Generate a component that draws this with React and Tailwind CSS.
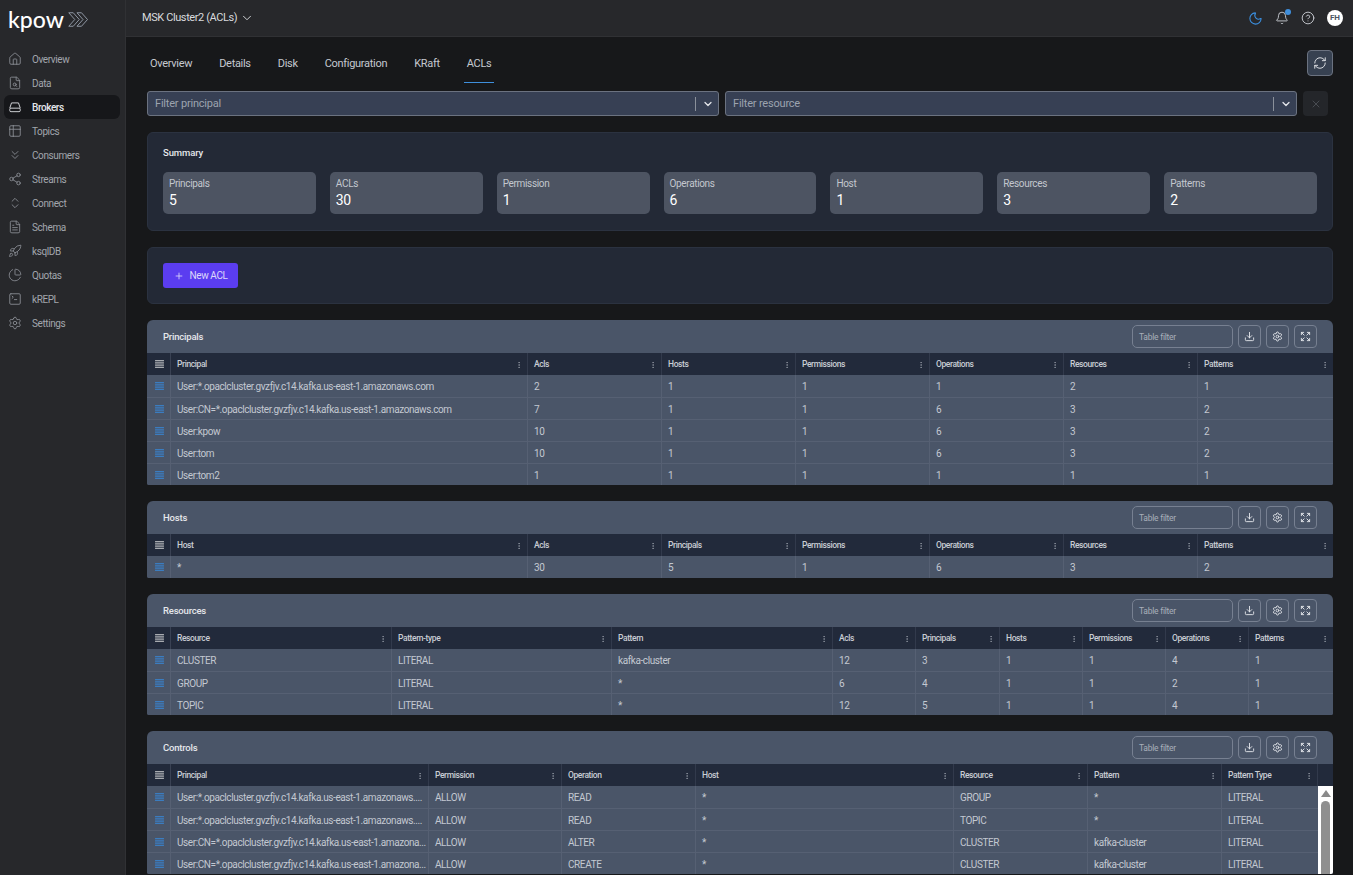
import React from "react";
import { Home, FileSearch, Table2, ChevronsDown, Share2, ChevronsUpDown, FileText, Rocket, PieChart, SquareTerminal, Settings, ChevronDown, Moon, Bell, CircleHelp, RefreshCw, X, Plus, Download, Expand, EllipsisVertical } from "lucide-react";

const FONT = "font-['Roboto',sans-serif]";

const Brokers = (p) => (
  <svg viewBox="0 0 24 24" fill="none" stroke="currentColor" strokeWidth="2" {...p}>
    <path d="M3 14 6 5h12l3 9" />
    <rect x="3" y="14" width="18" height="6" rx="2" />
  </svg>
);

const Lines = ({ className }) => (
  <svg viewBox="0 0 10 9" className={className} fill="currentColor">
    <rect x="0" y="0" width="10" height="1.5" />
    <rect x="0" y="2.5" width="10" height="1.5" />
    <rect x="0" y="5" width="10" height="1.5" />
    <rect x="0" y="7.5" width="10" height="1.5" />
  </svg>
);

const nav = [
  ["Overview", Home], ["Data", FileSearch], ["Brokers", Brokers], ["Topics", Table2], ["Consumers", ChevronsDown], ["Streams", Share2],
  ["Connect", ChevronsUpDown], ["Schema", FileText], ["ksqlDB", Rocket], ["Quotas", PieChart], ["kREPL", SquareTerminal], ["Settings", Settings],
];

const Logo = () => (
  <div className="flex items-center gap-[4px]">
    <span className="text-[23px] leading-none font-medium font-['Lato',sans-serif] text-white">kpow</span>
    <svg viewBox="0 0 28 20" className="w-[21px] h-[17px] text-gray-400" fill="none" stroke="currentColor" strokeWidth="1.2">
      <path d="M1 1h6l8 9-8 9H1l8-9z" />
      <path d="M12 1h6l8 9-8 9h-6l8-9z" />
    </svg>
  </div>
);

const Sidebar = () => (
  <aside className="w-[126px] shrink-0 bg-[#27282b] border-r border-[#303134] flex flex-col">
    <div className="h-[37px] pl-[8px] pt-[2px] flex items-center">
      <Logo />
    </div>
    <nav className="mt-[10px] pl-[4px] pr-[5px] flex flex-col">
      {nav.map(([label, Icon]) => {
        const active = label === "Brokers";
        return (
          <div key={label} className={`h-[24px] rounded-md flex items-center pl-[4px] gap-[10px] text-[10px] tracking-[-0.4px] ${active ? "bg-[#16171a] text-gray-200 font-medium" : "text-[#a2a6ad]"}`}>
            <Icon className={`w-[14px] h-[14px] ${active ? "text-gray-200" : "text-[#8a8e95]"}`} strokeWidth={1.5} />
            <span className="pt-[1px]">{label}</span>
          </div>
        );
      })}
    </nav>
  </aside>
);

const Header = () => (
  <header className="h-[37px] shrink-0 bg-[#27282b] border-b border-[#303134] flex items-center justify-between pl-[16px] pr-[10px]">
    <div className="flex items-center gap-[3px] text-[#d8dade] text-[11px] tracking-[-0.4px]">
      <span>MSK Cluster2 (ACLs)</span>
      <ChevronDown className="w-[14px] h-[14px]" strokeWidth={1.6} />
    </div>
    <div className="flex items-center gap-[12px]">
      <Moon className="w-[15px] h-[15px] text-[#3b8fe0]" strokeWidth={1.7} />
      <div className="relative">
        <Bell className="w-[14px] h-[14px] text-gray-300" strokeWidth={1.5} />
        <span className="absolute -top-[2px] right-[-2px] w-[6px] h-[6px] rounded-full bg-[#3f8fdc]" />
      </div>
      <CircleHelp className="w-[14px] h-[14px] text-gray-300" strokeWidth={1.5} />
      <div className="w-[16px] h-[16px] rounded-full bg-white text-[#4b5563] text-[8px] font-bold flex items-center justify-center">FH</div>
    </div>
  </header>
);

const tabs = ["Overview", "Details", "Disk", "Configuration", "KRaft", "ACLs"];

const Tabs = () => (
  <div className="flex items-start justify-between h-[54px] pt-[13px]">
    <div className="flex gap-[21px]">
      {tabs.map((t) => (
        <div key={t} className={`px-[3px] h-[33px] pt-[6px] text-[11px] tracking-[-0.3px] text-[#c5c9d0] ${t === "ACLs" ? "border-b border-[#3f8fdc]" : ""}`}>{t}</div>
      ))}
    </div>
    <button className="w-[26px] h-[26px] rounded-[4px] border border-[#6b7280] bg-[#374151] flex items-center justify-center">
      <RefreshCw className="w-[14px] h-[14px] text-gray-200" strokeWidth={1.6} />
    </button>
  </div>
);

const Filter = ({ label }) => (
  <div className="flex-1 h-[25px] rounded-[3px] border border-[#6b7280] bg-[#374054] flex items-center justify-between pl-[7px] pr-[4px]">
    <span className="pt-[1px] text-[11px] tracking-[-0.2px] text-[#9ca3af]">{label}</span>
    <div className="flex items-center gap-[6px]">
      <span className="w-px h-[14px] bg-[#8a909a]" />
      <ChevronDown className="w-[12px] h-[12px] text-gray-200" strokeWidth={2.5} />
    </div>
  </div>
);

const summary = [["Principals", "5"], ["ACLs", "30"], ["Permission", "1"], ["Operations", "6"], ["Host", "1"], ["Resources", "3"], ["Patterns", "2"]];

const Summary = () => (
  <section className="h-[99px] rounded-[6px] bg-[#232936] border border-[#2b3240] px-[15px] pt-[14px]">
    <h2 className="text-[9.5px] tracking-[-0.1px] font-medium text-gray-200 leading-[12px]">Summary</h2>
    <div className="mt-[13px] flex gap-[14px]">
      {summary.map(([k, v]) => (
        <div key={k} className="flex-1 h-[42px] rounded-[5px] bg-[#4d5462] px-[6px] pt-[6px]">
          <div className="text-[10px] leading-[11px] tracking-[-0.35px] text-[#c3c7ce]">{k}</div>
          <div className="text-[14px] leading-[16px] mt-[3px] tracking-[-0.5px] text-white">{v}</div>
        </div>
      ))}
    </div>
  </section>
);

const NewAcl = () => (
  <section className="mt-[16px] h-[57px] rounded-[6px] bg-[#232936] border border-[#2b3240] px-[15px] pt-[15px]">
    <button className="w-[75px] h-[25px] rounded-[3px] bg-[#5b3df0] text-[#dcd8fb] text-[10px] tracking-[-0.4px] flex items-center justify-center gap-[6px]">
      <Plus className="w-[10px] h-[10px]" strokeWidth={2} />
      New ACL
    </button>
  </section>
);

const IconBtn = ({ children }) => (
  <button className="w-[23px] h-[23px] rounded-[4px] border border-[#778091] flex items-center justify-center text-gray-200">{children}</button>
);

const Grid = ({ columns, rows, scroll }) => (
  <div className="w-full">
    <div className="flex h-[22px] bg-[#222a3b]">
      <div className="w-[24px] shrink-0 border-r border-[#3a4254] pl-[1px] flex items-center justify-center">
        <Lines className="w-[9px] h-[8px] text-[#a8abb0]" />
      </div>
      {columns.map(([name, w]) => (
        <div key={name} style={{ width: w }} className="shrink-0 border-r border-[#323a4c] last:border-r-0 flex items-center justify-between pl-[6px] pr-[4px] pt-[1px] text-[8.5px] tracking-[-0.4px] font-medium text-[#c9cdd4]">
          <span>{name}</span>
          <EllipsisVertical className="w-[8px] h-[8px] text-[#9aa0aa]" strokeWidth={2} />
        </div>
      ))}
      {scroll && <div className="flex-1" />}
    </div>
    <div className="relative">
      {rows.map((row, i) => (
        <div key={i} className="flex h-[22px] bg-[#4a5568] border-t border-[#566073] first:border-t-0">
          <div className="w-[24px] shrink-0 border-r border-[#566073] pl-[1px] flex items-center justify-center">
            <Lines className="w-[9px] h-[8px] text-[#3b7dc0]" />
          </div>
          {columns.map(([name, w], j) => (
            <div key={name} style={{ width: w }} className="shrink-0 border-r border-[#566073] last:border-r-0 flex items-center px-[6px] pt-[1px] text-[10px] tracking-[-0.4px] text-[#c3c8d1] whitespace-nowrap">
              <span>{row[j]}</span>
            </div>
          ))}
        </div>
      ))}
      {scroll && (
        <div className="absolute right-0 top-0 bottom-0 w-[15px] bg-white flex flex-col items-center">
          <div className="mt-[4px] w-0 h-0 border-l-[5px] border-r-[5px] border-b-[7px] border-l-transparent border-r-transparent border-b-[#8a8a8a]" />
          <div className="mt-[4px] w-[9px] flex-1 rounded-t-full bg-[#8f8f8f]" />
        </div>
      )}
    </div>
  </div>
);

const TableCard = ({ title, columns, rows, scroll }) => (
  <section className="mt-[16px] rounded-t-[6px] rounded-b-[2px] bg-[#4a5568] overflow-hidden">
    <div className="h-[33px] flex items-center justify-between pl-[16px] pr-[16px]">
      <h3 className="text-[9.5px] pt-[1px] tracking-[-0.2px] font-medium text-gray-200">{title}</h3>
      <div className="flex items-center gap-[5px]">
        <div className="w-[101px] h-[23px] rounded-[5px] border border-[#778091] flex items-center px-[6px] pt-[1px] text-[8.5px] tracking-[-0.25px] text-[#a9afb9]">Table filter</div>
        <IconBtn><Download className="w-[11px] h-[11px]" strokeWidth={2} /></IconBtn>
        <IconBtn><Settings className="w-[11px] h-[11px]" strokeWidth={2} /></IconBtn>
        <IconBtn><Expand className="w-[11px] h-[11px]" strokeWidth={2} /></IconBtn>
      </div>
    </div>
    <Grid columns={columns} rows={rows} scroll={scroll} />
  </section>
);

const A = "User:*.opaclcluster.gvzfjv.c14.kafka.us-east-1.amazonaws.com";
const B = "User:CN=*.opaclcluster.gvzfjv.c14.kafka.us-east-1.amazonaws.com";

const principalCols = [["Principal", 357], ["Acls", 134], ["Hosts", 134], ["Permissions", 134], ["Operations", 134], ["Resources", 134], ["Patterns", 135]];
const principalRows = [
  [A, "2", "1", "1", "1", "2", "1"],
  [B, "7", "1", "1", "6", "3", "2"],
  ["User:kpow", "10", "1", "1", "6", "3", "2"],
  ["User:tom", "10", "1", "1", "6", "3", "2"],
  ["User:tom2", "1", "1", "1", "1", "1", "1"],
];
const hostCols = [["Host", 357], ["Acls", 134], ["Principals", 134], ["Permissions", 134], ["Operations", 134], ["Resources", 134], ["Patterns", 135]];
const hostRows = [["*", "30", "5", "1", "6", "3", "2"]];
const resourceCols = [["Resource", 221], ["Pattern-type", 220], ["Pattern", 221], ["Acls", 83], ["Principals", 84], ["Hosts", 83], ["Permissions", 83], ["Operations", 83], ["Patterns", 84]];
const resourceRows = [
  ["CLUSTER", "LITERAL", "kafka-cluster", "12", "3", "1", "1", "4", "1"],
  ["GROUP", "LITERAL", "*", "6", "4", "1", "1", "2", "1"],
  ["TOPIC", "LITERAL", "*", "12", "5", "1", "1", "4", "1"],
];
const controlCols = [["Principal", 258], ["Permission", 133], ["Operation", 134], ["Host", 258], ["Resource", 134], ["Pattern", 134], ["Pattern Type", 96]];
const controlRows = [
  ["User:*.opaclcluster.gvzfjv.c14.kafka.us-east-1.amazonaws....", "ALLOW", "READ", "*", "GROUP", "*", "LITERAL"],
  ["User:*.opaclcluster.gvzfjv.c14.kafka.us-east-1.amazonaws....", "ALLOW", "READ", "*", "TOPIC", "*", "LITERAL"],
  ["User:CN=*.opaclcluster.gvzfjv.c14.kafka.us-east-1.amazona...", "ALLOW", "ALTER", "*", "CLUSTER", "kafka-cluster", "LITERAL"],
  ["User:CN=*.opaclcluster.gvzfjv.c14.kafka.us-east-1.amazona...", "ALLOW", "CREATE", "*", "CLUSTER", "kafka-cluster", "LITERAL"],
];

export default function App() {
  return (
    <div className={`${FONT} h-[875px] w-full flex overflow-hidden bg-[#17181a]`}>
      <Sidebar />
      <div className="flex-1 min-w-0 flex flex-col">
        <Header />
        <main className="flex-1 overflow-hidden pl-[21px] pr-[20px]">
          <Tabs />
          <div className="flex gap-[6px] items-center pr-[5px]">
            <Filter label="Filter principal" />
            <Filter label="Filter resource" />
            <button className="w-[25px] h-[25px] rounded-[4px] bg-[#24262a] flex items-center justify-center">
              <X className="w-[12px] h-[12px] text-[#52565c]" strokeWidth={1.6} />
            </button>
          </div>
          <div className="mt-[16px]">
            <Summary />
            <NewAcl />
            <TableCard title="Principals" columns={principalCols} rows={principalRows} />
            <TableCard title="Hosts" columns={hostCols} rows={hostRows} />
            <TableCard title="Resources" columns={resourceCols} rows={resourceRows} />
            <TableCard title="Controls" columns={controlCols} rows={controlRows} scroll />
          </div>
        </main>
      </div>
    </div>
  );
}
